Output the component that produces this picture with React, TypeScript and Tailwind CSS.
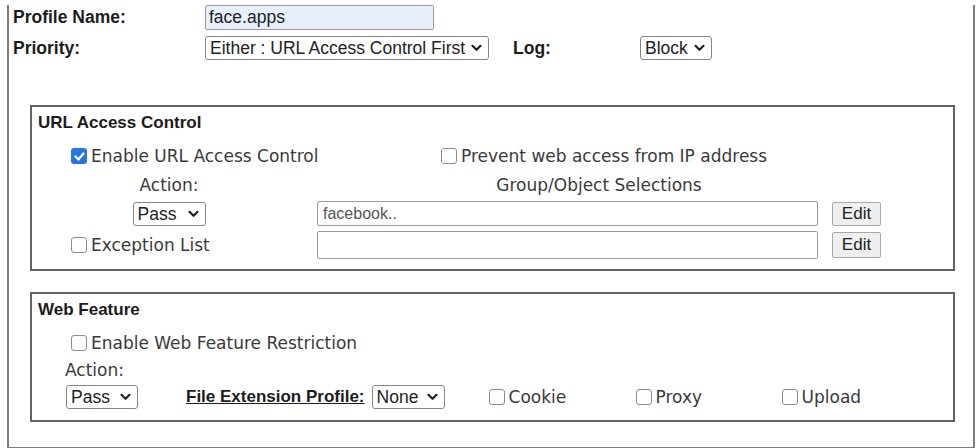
import React from "react";

const arial = "font-['Liberation_Sans',Arial,sans-serif]";
const verdana = "font-['DejaVu_Sans',Verdana,sans-serif]";

const Check = ({ checked = false }: { checked?: boolean }) =>
  checked ? (
    <span className="flex h-[16px] w-[16px] shrink-0 items-center justify-center rounded-[3px] bg-[#2a76e0]">
      <svg width="11" height="9" viewBox="0 0 11 9">
        <path d="M1.5 4.5l3 3 5-6" stroke="white" strokeWidth="2.2" fill="none" strokeLinecap="round" strokeLinejoin="round" />
      </svg>
    </span>
  ) : (
    <span className="h-[16px] w-[16px] shrink-0 rounded-[3px] border border-[#8c8c8c] bg-white" />
  );

const Chevron = () => (
  <svg width="11" height="8" viewBox="0 0 11 8" className="shrink-0">
    <path d="M1.5 1.8l4 4 4-4" stroke="#202020" strokeWidth="2.2" fill="none" strokeLinecap="round" strokeLinejoin="round" />
  </svg>
);

const Select = ({ value, className }: { value: string; className: string }) => (
  <div
    className={`flex h-[24px] shrink-0 items-center justify-between whitespace-nowrap rounded-[3px] border border-[#858585] bg-white pl-[4px] pr-[6px] text-[17.5px] leading-[20px] text-[#222] ${arial} ${className}`}
  >
    <span>{value}</span>
    <Chevron />
  </div>
);

const EditButton = ({ className }: { className: string }) => (
  <div
    className={`ml-[14px] flex w-[49px] shrink-0 items-center justify-center rounded-[2px] border border-[#a8a8a8] bg-[#efefef] text-[17px] text-[#222] ${arial} ${className}`}
  >
    Edit
  </div>
);

const CheckLabel = ({ label, checked = false }: { label: string; checked?: boolean }) => (
  <div className="flex items-center gap-[4px] whitespace-nowrap">
    <Check checked={checked} />
    <span className={`text-[17px] leading-[20px] text-[#3a3a3a] ${verdana}`}>{label}</span>
  </div>
);

export default function App() {
  return (
    <div className="h-[448px] w-[979px] bg-white">
      <div className="ml-[7px] h-[444px] w-[968px] border-x-2 border-b-2 border-[#7d7d7d]">
        {/* Profile name */}
        <div className="mt-[5px] flex h-[25px] items-center">
          <div className={`w-[196px] pl-[4px] text-[17.5px] font-bold text-[#1c1c1c] ${arial}`}>Profile Name:</div>
          <div
            className={`flex h-[25px] w-[229px] items-center rounded-[2px] border border-[#9a9a9a] bg-[#e8f0fe] pl-[3px] text-[17.5px] text-[#222] ${arial}`}
          >
            face.apps
          </div>
        </div>

        {/* Priority / Log */}
        <div className="mt-[6px] flex h-[24px] items-center">
          <div className={`w-[196px] pl-[4px] text-[17.5px] font-bold text-[#1c1c1c] ${arial}`}>Priority:</div>
          <Select value="Either : URL Access Control First" className="w-[284px]" />
          <div className={`ml-[24px] w-[127px] text-[17.5px] font-bold text-[#1c1c1c] ${arial}`}>Log:</div>
          <Select value="Block" className="w-[72px]" />
        </div>

        {/* URL Access Control */}
        <div className="ml-[21px] mt-[45px] w-[925px] border-2 border-[#626262] pb-[10px]">
          <div className={`pl-[6px] pt-[6px] text-[17px] font-bold leading-[20px] text-[#1c1c1c] ${arial}`}>
            URL Access Control
          </div>

          <div className="mt-[13px] flex h-[20px] items-center">
            <div className="w-[285px] shrink-0 pl-[39px]">
              <CheckLabel label="Enable URL Access Control" checked />
            </div>
            <div className="pl-[124px]">
              <CheckLabel label="Prevent web access from IP address" />
            </div>
          </div>

          <div className={`mt-[9px] flex h-[20px] items-center text-[17px] leading-[20px] text-[#3a3a3a] ${verdana}`}>
            <div className="w-[285px] pr-[11px] text-center">Action:</div>
            <div className="w-[564px] text-center">Group/Object Selections</div>
          </div>

          <div className="mt-[6px] flex h-[25px] items-center">
            <div className="flex w-[285px] justify-center pr-[11px]">
              <Select value="Pass" className="w-[73px]" />
            </div>
            <div
              className={`flex h-[25px] w-[501px] items-center rounded-[2px] border border-[#9a9a9a] pl-[5px] text-[16px] text-[#555] ${arial}`}
            >
              facebook..
            </div>
            <EditButton className="h-[24px]" />
          </div>

          <div className="mt-[5px] flex h-[28px] items-center">
            <div className="w-[285px] pl-[39px]">
              <CheckLabel label="Exception List" />
            </div>
            <div className="h-[28px] w-[501px] rounded-[2px] border border-[#9a9a9a]" />
            <EditButton className="h-[26px]" />
          </div>
        </div>

        {/* Web Feature */}
        <div className="ml-[21px] mt-[21px] w-[925px] border-2 border-[#626262] pb-[11px]">
          <div className={`pl-[6px] pt-[6px] text-[17px] font-bold leading-[20px] text-[#1c1c1c] ${arial}`}>
            Web Feature
          </div>

          <div className="mt-[13px] flex h-[20px] items-center pl-[39px]">
            <CheckLabel label="Enable Web Feature Restriction" />
          </div>

          <div className={`mt-[7px] h-[20px] pl-[33px] text-[17px] leading-[20px] text-[#3a3a3a] ${verdana}`}>
            Action:
          </div>

          <div className="mt-[5px] flex h-[24px] items-center pl-[34px]">
            <Select value="Pass" className="w-[72px]" />
            <div className={`ml-[48px] text-[17px] font-bold text-[#1c1c1c] underline ${arial}`}>
              File Extension Profile:
            </div>
            <Select value="None" className="ml-[7px] w-[73px]" />
            <div className="ml-[44px] w-[147px]">
              <CheckLabel label="Cookie" />
            </div>
            <div className="w-[146px]">
              <CheckLabel label="Proxy" />
            </div>
            <div>
              <CheckLabel label="Upload" />
            </div>
          </div>
        </div>
      </div>
    </div>
  );
}
